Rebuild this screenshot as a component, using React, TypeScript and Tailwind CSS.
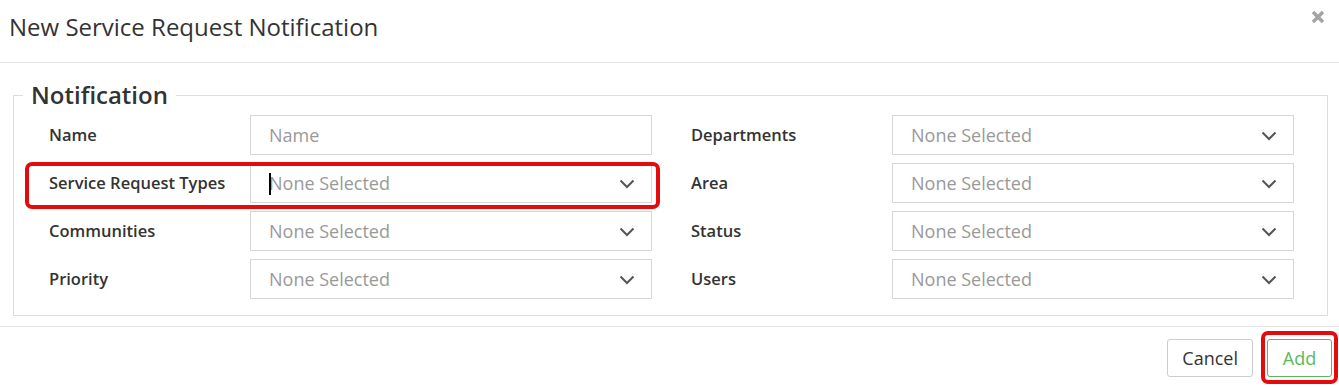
import React from "react";

const leftRows = [
  { label: "Name", kind: "text", placeholder: "Name" },
  { label: "Service Request Types", kind: "select", highlight: true, caret: true },
  { label: "Communities", kind: "select" },
  { label: "Priority", kind: "select" },
];

const rightRows = [
  { label: "Departments", kind: "select" },
  { label: "Area", kind: "select" },
  { label: "Status", kind: "select" },
  { label: "Users", kind: "select" },
];

function Chevron() {
  return (
    <svg width="16" height="10" viewBox="0 0 16 10" className="absolute right-[16px] top-[15px]">
      <polyline points="1.5,1.5 8,8 14.5,1.5" fill="none" stroke="#555" strokeWidth="2" />
    </svg>
  );
}

function Field({ row }: { row: any }) {
  return (
    <div className="relative flex items-center h-[40px]">
      <label className="w-[216px] pl-[15px] text-[16.5px] font-semibold text-[#333]">{row.label}</label>
      <div className="relative w-[402px] h-[40px] border border-[#d6d6d6] bg-white flex items-center pl-[18px] text-[18px] text-[#999]">
        {row.caret && <span className="absolute left-[18px] top-[9px] w-[2px] h-[22px] bg-black" />}
        {row.kind === "text" ? row.placeholder : "None Selected"}
        {row.kind === "select" && <Chevron />}
      </div>
      {row.highlight && (
        <div className="absolute -left-[9px] -top-[1px] w-[635px] h-[47px] border-4 border-[#e30b0b] rounded-[7px]" />
      )}
    </div>
  );
}

export default function App() {
  return (
    <div className="w-[1339px] h-[387px] bg-white font-['Open_Sans',sans-serif] text-[#333] overflow-hidden">
      <div className="relative h-[63px] border-b border-[#e5e5e5] pl-[9px] pt-[11px]">
        <h4 className="text-[24px] leading-[32px] text-[#333]">New Service Request Notification</h4>
        <svg width="14" height="14" viewBox="0 0 14 14" className="absolute left-[1311px] top-[10px]">
          <path d="M2 2 L12 12 M12 2 L2 12" stroke="#a3a3a3" strokeWidth="3.4" strokeLinecap="butt" />
        </svg>
      </div>
      <div className="pt-[16px] pb-[10px] pl-[13px] pr-[11px]">
        <fieldset className="border border-[#dddddd] pb-[16px]">
          <legend className="ml-[9px] px-[8px] text-[24px] leading-[32px] font-semibold text-[#333]">Notification</legend>
          <div className="flex pt-[4px] pl-[20px]">
            <div className="w-[642px] flex flex-col gap-[8px]">
              {leftRows.map((r) => (
                <Field key={r.label} row={r} />
              ))}
            </div>
            <div className="w-[642px] flex flex-col gap-[8px]">
              {rightRows.map((r) => (
                <Field key={r.label} row={r} />
              ))}
            </div>
          </div>
        </fieldset>
      </div>
      <div className="border-t border-[#e5e5e5] pt-[12px] pr-[7px] flex justify-end gap-[14px]">
        <button className="h-[38px] px-[14px] border border-[#cccccc] rounded-[3px] bg-white text-[18px] text-[#333]">Cancel</button>
        <div className="relative">
          <button className="h-[38px] w-[65px] border border-[#5cb85c] rounded-[3px] bg-white text-[18px] text-[#5cb85c]">Add</button>
          <div className="absolute -left-[6px] -top-[8px] w-[77px] h-[53px] border-4 border-[#e30b0b] rounded-[7px]" />
        </div>
      </div>
    </div>
  );
}
